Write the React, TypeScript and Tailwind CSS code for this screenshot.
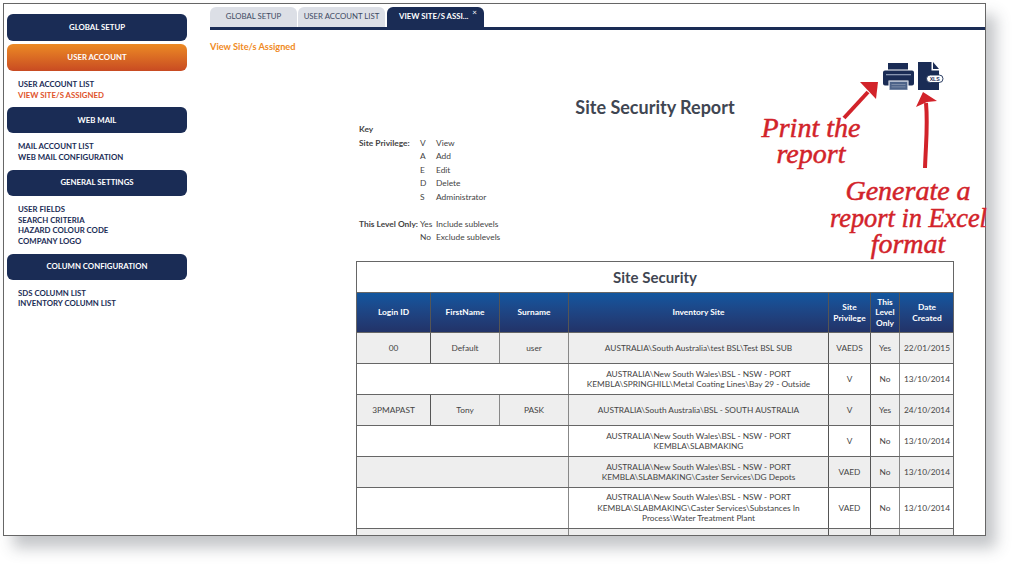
const font = "font-['Lato','Liberation_Sans',sans-serif]";

function NavHead({ label, active, h = 'h-[26px]' }: { label: string; active?: boolean; h?: string }) {
  return (
    <div
      className={`${h} w-[180px] rounded-[6px] flex items-center justify-center text-[7.8px] font-bold text-white ${
        active ? 'bg-gradient-to-b from-[#ec8a24] to-[#c84a22]' : 'bg-[#1a2c55]'
      }`}
    >
      {label}
    </div>
  );
}

function NavList({ items }: { items: { t: string; on?: boolean }[] }) {
  return (
    <div className="pl-[11px] pt-[8px] pb-[7px] text-[7.8px] font-bold leading-[10.7px] text-[#1a2c55]">
      {items.map((i) => (
        <div key={i.t} className={i.on ? 'text-[#e0532a]' : ''}>
          {i.t}
        </div>
      ))}
    </div>
  );
}

function Sidebar() {
  return (
    <aside className="w-[206px] shrink-0 pl-[3px] pt-[10px] flex flex-col">
      <NavHead label="GLOBAL SETUP" h="h-[27px]" />
      <div className="h-[3px]" />
      <NavHead label="USER ACCOUNT" active h="h-[27px]" />
      <NavList items={[{ t: 'USER ACCOUNT LIST' }, { t: 'VIEW SITE/S ASSIGNED', on: true }]} />
      <NavHead label="WEB MAIL" />
      <NavList items={[{ t: 'MAIL ACCOUNT LIST' }, { t: 'WEB MAIL CONFIGURATION' }]} />
      <NavHead label="GENERAL SETTINGS" />
      <NavList
        items={[{ t: 'USER FIELDS' }, { t: 'SEARCH CRITERIA' }, { t: 'HAZARD COLOUR CODE' }, { t: 'COMPANY LOGO' }]}
      />
      <NavHead label="COLUMN CONFIGURATION" />
      <NavList items={[{ t: 'SDS COLUMN LIST' }, { t: 'INVENTORY COLUMN LIST' }]} />
    </aside>
  );
}

function Tabs() {
  const tab = 'h-[20px] rounded-t-[6px] flex items-center text-[7.8px]';
  return (
    <div className="flex items-end border-b-[3px] border-[#1a2c55] h-[26px] gap-[2px]">
      <div className={`${tab} justify-center w-[87px] mr-[-1px] bg-[#dcdfe6] text-[#3c4a63]`}>GLOBAL SETUP</div>
      <div className={`${tab} justify-center w-[87px] bg-[#dcdfe6] text-[#3c4a63]`}>USER ACCOUNT LIST</div>
      <div className={`${tab} pl-[12px] w-[97px] bg-[#1a2c55] text-white font-bold relative`}>
        VIEW SITE/S ASSI...
        <span className="absolute right-[7px] top-[0px] text-[8px] leading-[10px] font-normal">×</span>
      </div>
    </div>
  );
}

function Key() {
  const rows = [
    ['Site Privilege:', 'V', 'View'],
    ['', 'A', 'Add'],
    ['', 'E', 'Edit'],
    ['', 'D', 'Delete'],
    ['', 'S', 'Administrator'],
    ['', '', ''],
    ['This Level Only:', 'Yes', 'Include sublevels'],
    ['', 'No', 'Exclude sublevels'],
  ];
  return (
    <div className="text-[8.4px] text-[#444] leading-[13.5px]">
      <div className="font-bold">Key</div>
      {rows.map((r, i) => (
        <div key={i} className="flex h-[13.5px]">
          <div className="w-[61px] font-bold">{r[0]}</div>
          <div className="w-[16px]">{r[1]}</div>
          <div>{r[2]}</div>
        </div>
      ))}
    </div>
  );
}

type Row = { a: string; b: string; c: string; site: string[]; p: string; l: string; d: string; h: string };
const rows: Row[] = [
  { a: '00', b: 'Default', c: 'user', site: ['AUSTRALIA\\South Australia\\test BSL\\Test BSL SUB'], p: 'VAEDS', l: 'Yes', d: '22/01/2015', h: 'h-[31px]' },
  { a: '', b: '', c: '', site: ['AUSTRALIA\\New South Wales\\BSL - NSW - PORT', 'KEMBLA\\SPRINGHILL\\Metal Coating Lines\\Bay 29 - Outside'], p: 'V', l: 'No', d: '13/10/2014', h: 'h-[31px]' },
  { a: '3PMAPAST', b: 'Tony', c: 'PASK', site: ['AUSTRALIA\\South Australia\\BSL - SOUTH AUSTRALIA'], p: 'V', l: 'Yes', d: '24/10/2014', h: 'h-[31px]' },
  { a: '', b: '', c: '', site: ['AUSTRALIA\\New South Wales\\BSL - NSW - PORT', 'KEMBLA\\SLABMAKING'], p: 'V', l: 'No', d: '13/10/2014', h: 'h-[31px]' },
  { a: '', b: '', c: '', site: ['AUSTRALIA\\New South Wales\\BSL - NSW - PORT', 'KEMBLA\\SLABMAKING\\Caster Services\\DG Depots'], p: 'VAED', l: 'No', d: '13/10/2014', h: 'h-[31px]' },
  { a: '', b: '', c: '', site: ['AUSTRALIA\\New South Wales\\BSL - NSW - PORT', 'KEMBLA\\SLABMAKING\\Caster Services\\Substances In', 'Process\\Water Treatment Plant'], p: 'VAED', l: 'No', d: '13/10/2014', h: 'h-[41px]' },
];

const cols = 'grid grid-cols-[74px_69px_69px_260px_42px_29px_54px]';

function Table() {
  const head = 'flex items-center justify-center text-center border-r border-[#555] text-white font-bold text-[8.4px] leading-[10.4px]';
  const cell = 'flex items-center justify-center text-center border-r border-[#888] text-[8.3px] leading-[10.4px] text-[#444]';
  return (
    <div className="w-[598px] border border-[#666] border-b-0">
      <div className="h-[30px] flex items-center justify-center text-[15px] font-bold text-[#3f4652]">Site Security</div>
      <div className={`${cols} h-[41px] border-y border-[#666] bg-gradient-to-b from-[#11569f] to-[#223368]`}>
        <div className={head}>Login ID</div>
        <div className={head}>FirstName</div>
        <div className={head}>Surname</div>
        <div className={head}>Inventory Site</div>
        <div className={head}>Site<br />Privilege</div>
        <div className={head}>This<br />Level<br />Only</div>
        <div className={`${head} border-r-0`}>Date<br />Created</div>
      </div>
      {rows.map((r, i) => (
        <div key={i} className={`${cols} ${r.h} border-b border-[#666] ${i % 2 === 0 ? 'bg-[#eeeeee]' : 'bg-white'}`}>
          {r.a ? (
            <>
              <div className={`${cell} border-r-[#555]`}>{r.a}</div>
              <div className={cell}>{r.b}</div>
              <div className={cell}>{r.c}</div>
            </>
          ) : (
            <div className={`${cell} col-span-3`} />
          )}
          <div className={`${cell} border-r-[#555]`}>
            <div>{r.site.map((s) => <div key={s}>{s}</div>)}</div>
          </div>
          <div className={`${cell} border-r-[#555]`}>{r.p}</div>
          <div className={cell}>{r.l}</div>
          <div className={`${cell} border-r-0 text-[7.6px]`}>{r.d}</div>
        </div>
      ))}
      <div className={`${cols} h-[8px] bg-[#eeeeee]`}>
        <div className="col-span-3 border-r border-[#888]" />
        <div className="border-r border-[#555]" />
        <div className="border-r border-[#555]" />
        <div className="border-r border-[#888]" />
        <div />
      </div>
    </div>
  );
}

function Icons() {
  return (
    <div className="absolute left-[673px] top-[58px] flex items-start gap-[4px]">
      <svg width="31" height="27" viewBox="0 0 31 27" className="mt-[1px]">
        <rect x="5" y="0" width="20" height="6.5" fill="#1a2c55" />
        <path d="M2 7.5h27a2 2 0 0 1 2 2v11a2 2 0 0 1-2 2h-3.5v-5h-20v5H2a2 2 0 0 1-2-2v-11a2 2 0 0 1 2-2z" fill="#1a2c55" />
        <rect x="3" y="11" width="25" height="1.3" fill="#8795b0" />
        <rect x="6.5" y="18.5" width="18" height="8.5" fill="#4d6389" stroke="#b8c2d4" strokeWidth="0.7" />
        <rect x="8.5" y="21" width="14" height="0.8" fill="#8795b0" />
        <rect x="8.5" y="23.5" width="14" height="0.8" fill="#8795b0" />
      </svg>
      <svg width="26" height="29" viewBox="0 0 26 29">
        <path d="M0 0h13.5v8.5h7.5v19.5H0z" fill="#1a2c55" />
        <path d="M15 0l6 7h-6z" fill="#1a2c55" />
        <rect x="8.5" y="13" width="16.5" height="7.5" rx="3.75" fill="#fff" stroke="#1a2c55" strokeWidth="0.9" />
        <text x="16.7" y="19" fontSize="5.2" fontWeight="700" textAnchor="middle" fill="#1a2c55" fontFamily="Liberation Sans">XLS</text>
      </svg>
    </div>
  );
}

function Annotations() {
  const hand =
    "absolute text-[#d2232a] font-['Liberation_Serif',serif] italic text-center whitespace-nowrap text-[28px] [-webkit-text-stroke:0.5px_#d2232a]";
  return (
    <>
      <svg className="absolute left-[840px] top-[80px]" width="110" height="95" viewBox="840 80 110 95">
        <path d="M844 118 L868 92" stroke="#d2232a" strokeWidth="4" fill="none" />
        <path d="M860 82 L878 82 L876 99 Z" fill="#d2232a" />
        <path d="M925 168 C926 140 928 125 926 103" stroke="#d2232a" strokeWidth="4" fill="none" />
        <path d="M916 107 L923 92 L937 101 L927 102 Z" fill="#d2232a" />
      </svg>
      <div className={`${hand} left-[751px] top-[115px] w-[120px] leading-[26px]`}>Print the<br />report</div>
      <div className={`${hand} left-[818px] top-[178px] w-[180px] leading-[26.5px]`}>
        Generate a<br />
        <span className="inline-block scale-x-[0.94]">report in Excel</span>
        <br />format
      </div>
    </>
  );
}

export default function App() {
  return (
    <div className={`${font} w-[1023px] h-[571px] bg-white overflow-hidden relative`}>
      <div className="absolute left-[3px] top-[3px] w-[983px] h-[533px] bg-white border border-[#666] shadow-[10px_12px_14px_rgba(60,65,75,0.3)] overflow-hidden flex">
        <Sidebar />
        <main className="flex-1 min-w-0 relative">
          <Tabs />
          <div className="pt-[10px] text-[9.2px] font-bold text-[#f08a24] leading-[14px]">View Site/s Assigned</div>
          <Icons />
          <div className="w-[598px] ml-[146px] text-center text-[18px] font-bold text-[#3f4652] leading-[24px] mt-[41px]">Site Security Report</div>
          <div className="ml-[149px] mt-[4px]"><Key /></div>
          <div className="ml-[146px] mt-[16.5px]"><Table /></div>
        </main>
      </div>
      <Annotations />
    </div>
  );
}
